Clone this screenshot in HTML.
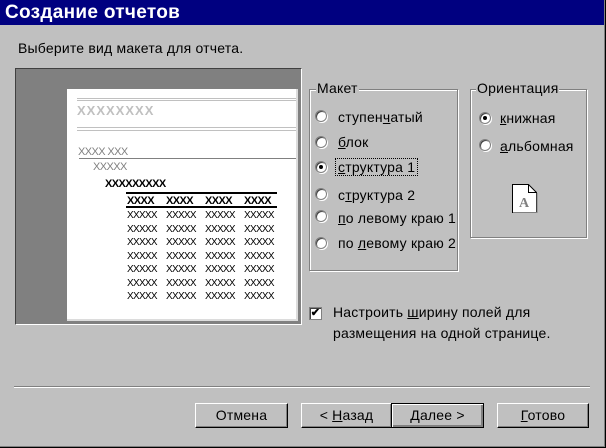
<!DOCTYPE html><html><head><meta charset="utf-8"><style>
*{margin:0;padding:0;box-sizing:border-box}
body{width:606px;height:448px;background:#c0c0c0;font-family:"Liberation Sans",sans-serif;font-size:14px;letter-spacing:0.2px;color:#000;position:relative;overflow:hidden}
.a{position:absolute;white-space:nowrap}
.title{left:0;top:0;width:606px;height:25px;background:#000080;color:#fff;font-weight:bold;font-size:19px;padding:2px 0 0 5px;letter-spacing:0.3px}
.grp{position:absolute;border:1px solid #808080;box-shadow:1px 1px 0 #fff,inset 1px 1px 0 #fff}
.lg{position:absolute;background:#c0c0c0;padding:0 1px;top:-10px}
.rad{position:absolute;width:12px;height:12px;border-radius:50%;background:#fff;border:1px solid #808080;box-shadow:inset 1px 1px 0 #404040,1px 1px 0 #fff}
.rad.on::after{content:"";position:absolute;left:3px;top:3px;width:4px;height:4px;border-radius:50%;background:#000}
.btn{position:absolute;top:403px;height:25px;background:#c0c0c0;border:1px solid;border-color:#fff #000 #000 #fff;box-shadow:inset -1px -1px 0 #808080;text-align:center;line-height:22px;font-size:14px}
u{text-decoration:underline}
.x{position:absolute;font-size:11px;letter-spacing:-0.6px}
.c{position:absolute;top:209px;font-size:10px;letter-spacing:-0.7px;line-height:13.5px;white-space:pre}
</style></head><body>
<div class="a title">Создание отчетов</div>
<div class="a" style="left:18px;top:40px">Выберите вид макета для отчета.</div>
<div class="a" style="left:15px;top:68px;width:287px;height:257px;border:1px solid;border-color:#404040 #fff #fff #404040;background:#808080"></div>
<div class="a" style="left:67px;top:89px;width:231px;height:232px;background:#fff;border-right:2px solid #dcdcdc;border-bottom:2px solid #dcdcdc"></div>
<div class="a" style="left:77px;top:98px;width:219px;height:3px;border-top:1px solid #c0c0c0;border-bottom:1px solid #c0c0c0"></div>
<div class="a" style="left:77px;top:103px;color:#c0c0c0;font-size:13px;font-weight:bold;letter-spacing:1px">XXXXXXXX</div>
<div class="a" style="left:77px;top:127px;width:219px;height:4px;border-top:1px solid #c0c0c0;border-bottom:1px solid #c0c0c0"></div>
<div class="x" style="left:78px;top:146px;color:#808080">XXXX XXX</div>
<div class="a" style="left:79px;top:158px;width:217px;height:1px;background:#808080"></div>
<div class="x" style="left:93px;top:161px;color:#808080">XXXXX</div>
<div class="x" style="left:105px;top:178px;font-weight:bold">XXXXXXXXX</div>
<div class="a" style="left:126px;top:192px;width:151px;height:2px;background:#000"></div>
<div class="x" style="left:127px;top:195px;font-weight:bold">XXXX</div>
<div class="x" style="left:166px;top:195px;font-weight:bold">XXXX</div>
<div class="x" style="left:205px;top:195px;font-weight:bold">XXXX</div>
<div class="x" style="left:244px;top:195px;font-weight:bold">XXXX</div>
<div class="a" style="left:126px;top:206px;width:151px;height:2px;background:#000"></div>
<div class="c" style="left:127px">XXXXX
XXXXX
XXXXX
XXXXX
XXXXX
XXXXX
XXXXX</div>
<div class="c" style="left:166px">XXXXX
XXXXX
XXXXX
XXXXX
XXXXX
XXXXX
XXXXX</div>
<div class="c" style="left:205px">XXXXX
XXXXX
XXXXX
XXXXX
XXXXX
XXXXX
XXXXX</div>
<div class="c" style="left:244px">XXXXX
XXXXX
XXXXX
XXXXX
XXXXX
XXXXX
XXXXX</div>
<div class="grp" style="left:309px;top:89px;width:149px;height:182px"><span class="lg" style="left:6px">Макет</span></div>
<div class="rad" style="left:315px;top:110px"></div><div class="a" style="left:338px;top:109px">ступен<u>ч</u>атый</div>
<div class="rad" style="left:315px;top:136px"></div><div class="a" style="left:338px;top:134px"><u>б</u>лок</div>
<div class="rad on" style="left:315px;top:161px"></div><div class="a" style="left:335px;top:158px;border:1px dotted #000;padding:0 2px"><u>с</u>труктура 1</div>
<div class="rad" style="left:315px;top:188px"></div><div class="a" style="left:338px;top:187px">с<u>т</u>руктура 2</div>
<div class="rad" style="left:315px;top:210px"></div><div class="a" style="left:338px;top:210px"><u>п</u>о левому краю 1</div>
<div class="rad" style="left:315px;top:237px"></div><div class="a" style="left:338px;top:235px">по <u>л</u>евому краю 2</div>
<div class="grp" style="left:470px;top:89px;width:117px;height:149px"><span class="lg" style="left:5px">Ориентация</span></div>
<div class="rad on" style="left:479px;top:112px"></div><div class="a" style="left:500px;top:110px"><u>к</u>нижная</div>
<div class="rad" style="left:479px;top:139px"></div><div class="a" style="left:500px;top:138px"><u>а</u>льбомная</div>
<svg class="a" style="left:511px;top:183px" width="27" height="31"><path d="M1.5 1.5H17.5L25.5 9.5V29.5H1.5Z" fill="#fff" stroke="#000"/><path d="M17.5 1.5V9.5H25.5" fill="none" stroke="#000"/><path d="M2 29.5H26V10" fill="none" stroke="#808080"/><text x="8" y="24" font-family="Liberation Serif" font-weight="bold" font-size="14" fill="#808080">A</text></svg>
<div class="a" style="left:309px;top:307px;width:13px;height:13px;background:#fff;border:1px solid #808080;box-shadow:inset 1px 1px 0 #404040;font-size:11px;line-height:11px;text-align:center;font-weight:bold">✔</div>
<div class="a" style="left:333px;top:302px;line-height:21px">Настроить <u>ш</u>ирину полей для<br>размещения на одной странице.</div>
<div class="a" style="left:14px;top:386px;width:576px;height:2px;border-top:1px solid #808080;border-bottom:1px solid #fff"></div>
<div class="btn" style="left:195px;width:93px">Отмена</div>
<div class="btn" style="left:301px;width:91px">&lt; <u>Н</u>азад</div>
<div class="btn" style="left:391px;width:93px;border:1px solid #000;box-shadow:inset 1px 1px 0 #fff,inset -2px -2px 0 #808080"><u>Д</u>алее &gt;</div>
<div class="btn" style="left:497px;width:92px"><u>Г</u>отово</div>
<div class="a" style="left:0;top:0;width:606px;height:448px;border-right:1px solid #000;border-bottom:1px solid #000;box-shadow:inset -1px -1px 0 #808080"></div>
</body></html>
